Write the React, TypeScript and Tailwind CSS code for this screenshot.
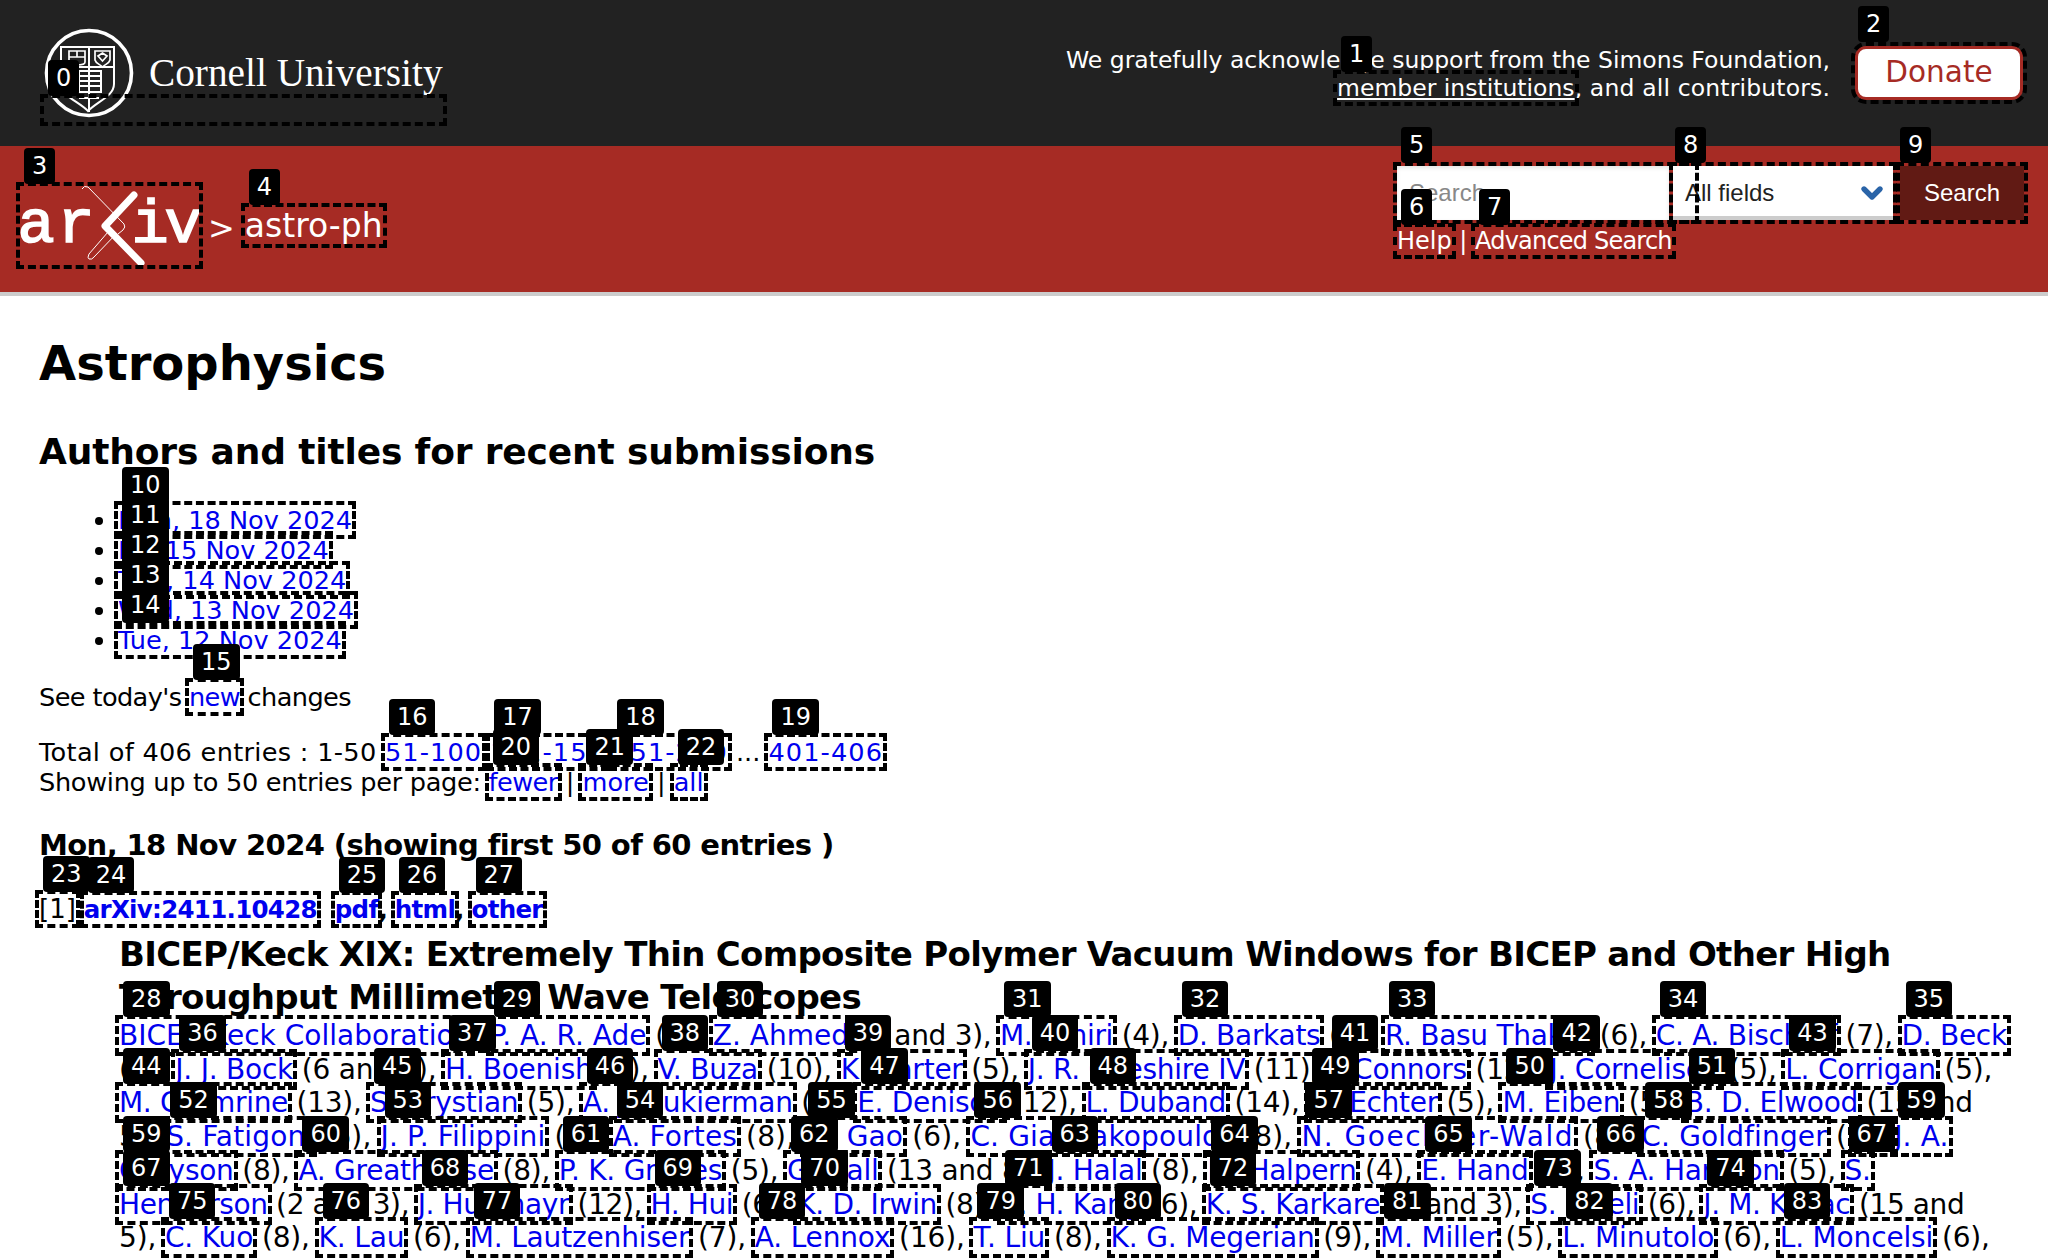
import { ReactNode } from 'react'
import { ChevronDown } from 'lucide-react'

function Tag({ n, className = 'left-1 bottom-[calc(100%+2px)]' }: { n: number; className?: string }) {
  return (
    <span className={`absolute z-10 h-9 min-w-[31px] rounded-[4px] bg-black px-2 text-center font-['DejaVu_Sans',sans-serif] text-[24px] font-normal leading-9 tracking-normal text-white whitespace-nowrap no-underline ${className}`}>
      {n}
    </span>
  )
}

// link with the dashed annotation box and its number above it
function A({ n, children, className = 'text-[#0000ee]', tag }: { n: number; children: ReactNode; className?: string; tag?: string }) {
  return (
    <a className={`relative outline-4 outline-dashed outline-black ${className}`}>
      {children}
      <Tag n={n} className={tag} />
    </a>
  )
}

function Seal() {
  return (
    <svg width="90" height="90" viewBox="0 0 90 90" fill="none" stroke="#fff" className="shrink-0">
      <circle cx="45" cy="45" r="42.5" strokeWidth="3.6" />
      <path d="M17 19H70V56C70 68 54 73 44 83C34 73 17 68 17 56Z" strokeWidth="2" />
      <path d="M25 23H41V34C41 36 37 37 33 37C29 37 25 36 25 34ZM25 29H41M33 23V29" strokeWidth="1.7" />
      <path d="M51 23H66V32C65 36 61 36 58.5 39C56 36 52 36 51 32ZM54 28L58.5 25L63 28L58.5 33Z" strokeWidth="1.7" />
      <path d="M45 19V38M17 39H70" strokeWidth="2" />
      <path d="M35 43H57V64H35ZM45 38V84M35 48H57M35 53H57M35 58H57M35 70H55" strokeWidth="2" />
    </svg>
  )
}

function ArxivLogo() {
  const glyph = { fontFamily: "'Liberation Mono', monospace", fontWeight: 400, fontSize: 62, fill: '#fff', stroke: '#fff', strokeWidth: 1.6, textAnchor: 'middle' as const }
  return (
    <svg width="179" height="79" viewBox="0 0 179 79" className="block">
      <text x="16" y="56" {...glyph}>a</text>
      <text x="56" y="56" {...glyph}>r</text>
      <text x="130" y="56" {...glyph}>i</text>
      <text x="163" y="56" {...glyph}>v</text>
      <g fill="none" stroke="#fff" strokeWidth="1">
        <path d="M62 3Q64 -1 68 1L104 38Q106 41 103 44L98 48" />
        <path d="M88 46L69 68Q67 72 69 73Q72 74 74 71L97 47" />
      </g>
      <path d="M114 9L85 40L121 77" stroke="#fff" strokeWidth="7" strokeLinecap="round" strokeLinejoin="round" fill="none" />
    </svg>
  )
}

export default function App() {
  return (
    <div className="h-[1258px] w-[2048px] overflow-hidden bg-white font-['DejaVu_Sans',sans-serif] text-black">
      {/* Cornell strip */}
      <div className="flex h-[146px] justify-between bg-[#222222] pl-[44px] pr-[25px] text-white">
        <div className="relative w-[403px]">
          <div className="flex items-center gap-[15px] pt-[28px]">
            <Seal />
            <span className="-mt-[1px] font-['Liberation_Serif',serif] text-[39.3px] leading-[44px]">Cornell University</span>
          </div>
          <a className="absolute left-0 top-[98px] h-[24px] w-[399px] outline-4 outline-dashed outline-black">
            <Tag n={0} />
          </a>
        </div>
        <div className="flex items-start gap-[25px] pt-[46px]">
          <p className="text-right text-[23.5px] leading-[28px] whitespace-nowrap">
            We gratefully acknowledge support from the Simons Foundation,
            <br />
            <A n={1} className="underline">member institutions</A>
            <span className="tracking-[0.15px]">, and all contributors.</span>
          </p>
          <a className="relative flex h-[54px] w-[168px] items-center justify-center rounded-[11px] border-[3px] border-[#a62b24] bg-white pb-[2px] text-[29.5px] text-[#a62b24] outline-4 outline-dashed outline-black">
            Donate
            <Tag n={2} className="left-0 bottom-[calc(100%+7px)]" />
          </a>
        </div>
      </div>

      {/* arXiv strip */}
      <div className="flex h-[150px] justify-between border-b-4 border-[#cccccc] bg-[#a62b24] pl-[20px] pr-[24px] text-white">
        <div className="flex items-start pt-[40px]">
          <a className="relative outline-4 outline-dashed outline-black">
            <ArxivLogo />
            <Tag n={3} />
          </a>
          <span className="ml-[9px] mt-[23px] text-[32px] leading-[38px]">&gt;</span>
          <span className="ml-[10px] mt-[21px] text-[33px] leading-[37px]">
            <A n={4} className="block">astro-ph</A>
          </span>
        </div>
        <div className="w-[627px] pt-[20px] font-['Liberation_Sans',sans-serif]">
          <div className="flex h-[54px]">
            <div className="relative w-[272px]">
              <input
                placeholder="Search..."
                className="h-full w-full bg-white px-[12px] text-[24px] text-black shadow-[inset_0_2px_4px_#0000001a] outline-none placeholder:text-[#888888]"
              />
              <span className="absolute left-0 top-0 z-[1] h-[54px] w-[298px] outline-4 outline-dashed outline-black" />
              <Tag n={5} className="left-1 bottom-[calc(100%+3px)]" />
            </div>
            <div className="relative ml-[4px] flex w-[220px] items-center border-b-4 border-[#cccccc] bg-white pl-[12px] pt-[3px] text-[24px] text-[#222222] outline-4 outline-dashed outline-black">
              All fields
              <ChevronDown className="absolute right-[5px] top-[11px] text-[#2a64a8]" size={32} strokeWidth={4} />
              <Tag n={8} className="left-[2px] bottom-[calc(100%+3px)]" />
            </div>
            <a className="relative ml-[7px] flex flex-1 items-center justify-center bg-[#611a14] text-[24px] outline-4 outline-dashed outline-black">
              Search
              <Tag n={9} className="left-0 bottom-[calc(100%+3px)]" />
            </a>
          </div>
          <div className="mt-[7px] font-['DejaVu_Sans',sans-serif] text-[24px] leading-[28px]">
            <A n={6} className="text-white">Help</A> | <A n={7} className="text-white tracking-[-0.8px]">Advanced Search</A>
          </div>
        </div>
      </div>

      {/* listing */}
      <div className="pl-[39px] pt-[37px]">
        <h1 className="text-[48px] font-bold leading-[60px]">Astrophysics</h1>
        <h2 className="mt-[39px] text-[36px] font-bold leading-[40px] tracking-[-0.15px]">Authors and titles for recent submissions</h2>
        <ul className="mt-[33px] list-disc pl-[79px] text-[25.6px] leading-[30px]">
          <li><A n={10}>Mon, 18 Nov 2024</A></li>
          <li><A n={11}>Fri, 15 Nov 2024</A></li>
          <li><A n={12}>Thu, 14 Nov 2024</A></li>
          <li><A n={13}>Wed, 13 Nov 2024</A></li>
          <li><A n={14}>Tue, 12 Nov 2024</A></li>
        </ul>
        <p className="mt-[27px] text-[25.6px] leading-[30px] tracking-[-0.6px]">
          See today's <A n={15}>new</A> changes
        </p>
        <p className="mt-[25px] text-[25.6px] leading-[30px]">
          <span className="tracking-[0.3px]">Total of 406 entries : 1-50 </span>
          <A n={16} className="text-[#0000ee] tracking-[1.1px]">51-100</A> <A n={17} className="text-[#0000ee] tracking-[1.1px]">101-150</A> <A n={18} className="text-[#0000ee] tracking-[1.1px]">151-200</A> ... <A n={19} className="text-[#0000ee] tracking-[1.1px]">401-406</A>
          <br />
          <span className="tracking-[-0.3px]">Showing up to 50 entries per page: </span>
          <A n={20} className="text-[#0000ee] tracking-[-0.6px]">fewer</A> | <A n={21}>more</A> | <A n={22}>all</A>
        </p>
        <h3 className="mt-[30px] text-[29px] font-bold leading-[36px] tracking-[-0.6px]">Mon, 18 Nov 2024 (showing first 50 of 60 entries )</h3>
        <div className="mt-[29px] text-[24.5px] font-bold leading-[34px] tracking-[-0.7px]">
          <A n={23} className="text-[26px] font-normal tracking-normal">[1]</A> <A n={24}>arXiv:2411.10428</A> <span className="ml-[10px]" /><A n={25}>pdf</A>, <A n={26}>html</A>, <A n={27}>other</A>
        </div>
        <div className="pl-[80px]">
          <div className="mt-[6px] text-[34px] font-bold leading-[43px] tracking-[-0.7px] whitespace-nowrap">
            BICEP/Keck XIX: Extremely Thin Composite Polymer Vacuum Windows for BICEP and Other High
            <br />
            Throughput Millimeter Wave Telescopes
          </div>
          <div className="text-[28px] leading-[33.7px] whitespace-nowrap">
            <div>
              <A n={28}>BICEP/Keck Collaboration</A>: <A n={29}>P. A. R. Ade</A> (1), <A n={30}>Z. Ahmed</A>
              <span className="tracking-[-0.3px]"> (2 and 3), <A n={31}>M. Amiri</A> (4), <A n={32}>D. Barkats</A> (5), <A n={33}>R. Basu Thakur</A> (6), <A n={34}>C. A. Bischoff</A> (7), <A n={35}>D. Beck</A></span>
            </div>
            <div className="tracking-[-0.23px]">(5), <A n={36}>J. J. Bock</A> (6 and 8), <A n={37}>H. Boenish</A> (5), <A n={38}>V. Buza</A> (10), <A n={39}>K. Carter</A> (5), <A n={40}>J. R. Cheshire IV</A> (11), <A n={41}>J. Connors</A> (12), <A n={42}>J. Cornelison</A> (5), <A n={43}>L. Corrigan</A> (5),</div>
            <div className="tracking-[-0.3px]"><A n={44}>M. Crumrine</A> (13), <A n={45}>S. Crystian</A> (5), <A n={46}>A. J. Cukierman</A> (5), <A n={47}>E. Denison</A> (12), <A n={48}>L. Duband</A> (14), <A n={49}>M. Echter</A> (5), <A n={50}>M. Eiben</A> (5), <A n={51}>B. D. Elwood</A> (15 and</div>
            <div className="tracking-[0.15px]">
              5), <A n={52}>S. Fatigoni</A> (6), <A n={53}>J. P. Filippini</A> (8), <A n={54}>A. Fortes</A> (8), <A n={55}>M. Gao</A> (6), <A n={56}>C. Giannakopoulos</A> (8), <A n={57} className="text-[#0000ee] tracking-[1.5px]">N. Goeckner-Wald</A> (8), <A n={58}>C. Goldfinger</A> (8), <A n={59}>J. A.<span className="absolute -left-[42px] top-0 bottom-0 w-[42px] outline-4 outline-dashed outline-black" /></A>
            </div>
            <div className="tracking-[-0.26px]"><A n={59}>Grayson</A> (8), <A n={60}>A. Greathouse</A> (8), <A n={61}>P. K. Grimes</A> (5), <A n={62}>G. Hall</A> (13 and 8), <A n={63}>J. Halal</A> (8), <A n={64}>M. Halpern</A> (4), <A n={65}>E. Hand</A> (5), <A n={66}>S. A. Harrison</A> (5), <A n={67}>S.</A></div>
            <div className="tracking-[-0.38px]"><A n={67}>Henderson</A> (2 and 3), <A n={68}>J. Hubmayr</A> (12), <A n={69}>H. Hui</A> (6), <A n={70}>K. D. Irwin</A> (8), <A n={71}>S. H. Kang</A> (6), <A n={72}>K. S. Karkare</A> (2 and 3), <A n={73}>S. Kefeli</A> (6), <A n={74}>J. M. Kovac</A> (15 and</div>
            <div className="tracking-[-0.16px]">5), <A n={75}>C. Kuo</A> (8), <A n={76}>K. Lau</A> (6), <A n={77}>M. Lautzenhiser</A> (7), <A n={78}>A. Lennox</A> (16), <A n={79}>T. Liu</A> (8), <A n={80}>K. G. Megerian</A> (9), <A n={81}>M. Miller</A> (5), <A n={82}>L. Minutolo</A> (6), <A n={83}>L. Moncelsi</A> (6),</div>
          </div>
        </div>
      </div>
    </div>
  )
}
